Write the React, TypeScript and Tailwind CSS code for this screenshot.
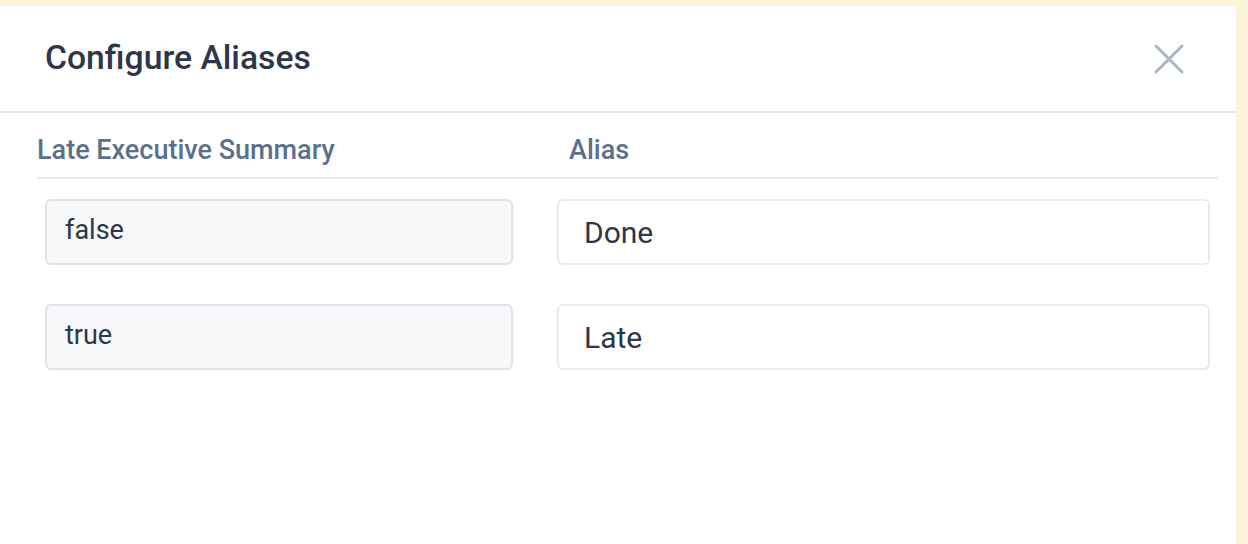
const rows = [
  { value: "false", alias: "Done" },
  { value: "true", alias: "Late" },
];

export default function App() {
  return (
    <div
      className="w-[1248px] h-[544px] bg-[#fdf3da] pt-[6px] pr-[12px] overflow-hidden"
      style={{ fontFamily: "Roboto, 'Noto Sans', sans-serif" }}
    >
      <div className="bg-white h-full w-[1236px] flex flex-col">
        <div className="flex items-center justify-between h-[107px] pl-[45px] pr-[52px] border-b-2 border-[#e3e6ea]">
          <h1 className="text-[33.7px] font-medium text-[#2d3748] -mt-[1px]">Configure Aliases</h1>
          <svg width="30" height="30" viewBox="0 0 30 30" className="text-[#a7b4c2]">
            <path d="M2 2L28 28M28 2L2 28" stroke="currentColor" strokeWidth="3" strokeLinecap="round" />
          </svg>
        </div>
        <div className="pl-[37px] pr-[18px]">
          <div className="grid grid-cols-[520px_1fr] h-[66px] items-center border-b-2 border-[#e8ebef] text-[27px] font-medium text-[#5b7189]">
            <span className="pt-[10px]">Late Executive Summary</span>
            <span className="pt-[10px] pl-[12px]">Alias</span>
          </div>
          <div className="flex flex-col gap-[39px] pt-[20px] pl-[8px] pr-[8px]">
            {rows.map((r) => (
              <div key={r.value} className="flex gap-[44px]">
                <div className="w-[468px] h-[66px] rounded-[6px] border-2 border-[#dfe4ea] bg-[#f6f8fa] flex items-center pl-[18px] text-[27px] text-[#2d3748] pb-[4px]">
                  {r.value}
                </div>
                <div className="flex-1 h-[66px] rounded-[6px] border-2 border-[#e9ebef] bg-white flex items-center pl-[25px] text-[30px] text-[#2d3748]">
                  {r.alias}
                </div>
              </div>
            ))}
          </div>
        </div>
      </div>
    </div>
  );
}
